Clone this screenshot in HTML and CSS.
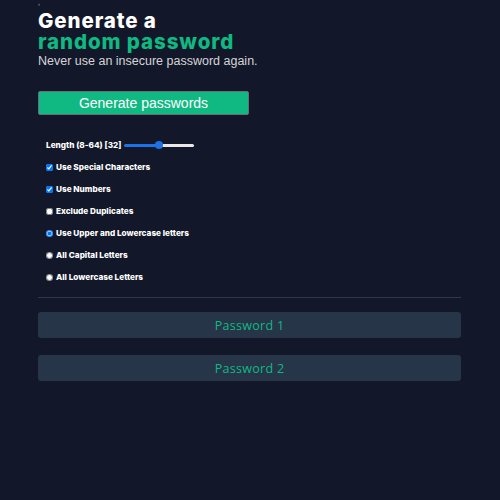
FILE: index.html
```html
<!DOCTYPE html>
<html>
<head>
<meta charset="utf-8">
<link rel="stylesheet" href="styles.css">
</head>
<body>
<div class="page">
  <span class="mark">&lsaquo;</span>
  <h1 class="title"><span class="line">Generate a</span><span class="line accent">random password</span></h1>
  <p class="subtitle">Never use an insecure password again.</p>
  <button class="gen-btn">Generate passwords</button>
  <div class="options">
    <label class="opt">Length (8-64) [32] <input class="range" type="range" min="8" max="64" value="36"></label>
    <label class="opt"><input type="checkbox" checked> Use Special Characters</label>
    <label class="opt"><input type="checkbox" checked> Use Numbers</label>
    <label class="opt"><input type="checkbox"> Exclude Duplicates</label>
    <label class="opt"><input type="radio" name="case" checked> Use Upper and Lowercase letters</label>
    <label class="opt"><input type="radio" name="case"> All Capital Letters</label>
    <label class="opt"><input type="radio" name="case"> All Lowercase Letters</label>
  </div>
  <hr class="divider">
  <div class="pw-list">
    <div class="pw">Password 1</div>
    <div class="pw">Password 2</div>
  </div>
</div>
</body>
</html>
```

FILE: styles.css
```css
html, body {
  margin: 0;
  padding: 0;
  background: #121829;
  height: 100%;
}
.page {
  width: 423px;
  margin: 0 0 0 38px;
  position: relative;
  font-family: "Liberation Sans", Arial, sans-serif;
}
.mark {
  position: absolute;
  left: 0;
  top: 0;
  font-size: 6px;
  line-height: 8px;
  color: #9ca3af;
}
.title {
  margin: 0;
  padding-top: 10px;
  font-family: Inter, sans-serif;
  font-weight: 800;
  font-size: 20.5px;
  letter-spacing: 0.9px;
  color: #ffffff;
}
.line {
  display: block;
  height: 21px;
  line-height: 21px;
}
.accent {
  color: #10b981;
}
.subtitle {
  margin: 2px 0 0;
  font-size: 12.5px;
  line-height: 15px;
  color: #d5d4d8;
}
.gen-btn {
  display: block;
  margin-top: 22px;
  width: 211px;
  height: 24px;
  background: #10b981;
  border: 1px solid #6b6e78;
  border-radius: 2px;
  color: #ffffff;
  font-family: "Liberation Sans", Arial, sans-serif;
  font-size: 14px;
  padding: 0;
}
.options {
  display: flex;
  flex-direction: column;
  gap: 8px;
  padding: 23px 8px 0;
}
.opt {
  display: flex;
  align-items: center;
  gap: 1px;
  height: 14px;
  font-family: Inter, sans-serif;
  font-weight: 800;
  font-size: 8.2px;
  color: #ffffff;
}
.opt input[type=checkbox], .opt input[type=radio] {
  width: 7px;
  height: 7px;
  margin: 0 2px 0 0;
}
.range {
  -webkit-appearance: none;
  appearance: none;
  width: 70px;
  height: 3px;
  margin: 0 0 0 2px;
  border-radius: 2px;
  background: linear-gradient(to right, #1a73e8 0 51%, #e8e8e8 51% 100%);
}
.range::-webkit-slider-thumb {
  -webkit-appearance: none;
  appearance: none;
  width: 8px;
  height: 8px;
  border-radius: 50%;
  background: #1a73e8;
  border: none;
}
.divider {
  border: none;
  border-top: 1px solid #2c3a4f;
  margin: 13px 0 0;
}
.pw-list {
  display: flex;
  flex-direction: column;
  gap: 17px;
  margin-top: 14px;
}
.pw {
  height: 26px;
  background: #273549;
  border-radius: 3px;
  display: flex;
  align-items: center;
  justify-content: center;
  color: #10b981;
  font-family: "Open Sans", sans-serif;
  font-size: 12.5px;
  letter-spacing: 0.3px;
}
```
